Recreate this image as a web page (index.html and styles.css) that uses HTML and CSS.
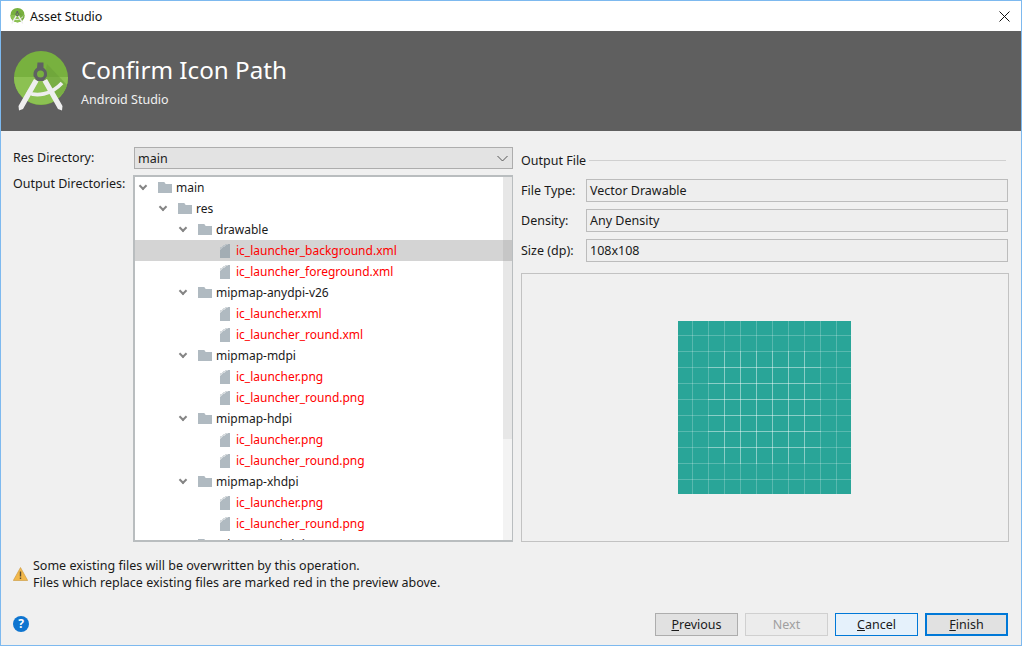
FILE: index.html
```html
<!DOCTYPE html>
<html lang="en">
<head>
    <meta charset="UTF-8">
    <title>Asset Studio</title>
    <link rel="stylesheet" href="styles.css">
</head>
<body>
<div class="window">
    <div class="titlebar">
        <svg class="title-icon" viewBox="0 0 54 60">
            <symbol id="studio-logo" viewBox="0 0 54 60">
                <circle cx="27" cy="27" r="27" fill="#78b13f"/>
                <path d="M0 26h54a27 27 0 0 1-54 1z" fill="#8cc152"/>
                <path d="M33 13L53 34a27 27 0 0 1-9 13L30 28z" fill="#6a9f38" opacity=".55"/>
                <path d="M23.500 11.500h6v5.200a7.500 7.500 0 0 1 3.500 6.300v2l-3.500 5h-6.500l-3.500-5v-2a7.500 7.500 0 0 1 3.500-6.300z" fill="#5f6163"/>
                <circle cx="26.500" cy="23" r="3.500" fill="#78b13f"/>
                <path d="M20 28l4.500 2.500L9 58l-4 1.500-.5-4.500zM33 28l-4.500 2.500L44 58l4 1.500.5-4.500z" fill="#eeeeee"/>
                <path d="M13 41c9 5 24 3 35-9" fill="none" stroke="#eeeeee" stroke-width="3.600"/>
            </symbol>
            <use href="#studio-logo"/>
        </svg>
        <span class="title-text">Asset Studio</span>
        <svg class="close-icon" viewBox="0 0 11 11"><path d="M.5.5l10 10M10.500.5l-10 10" stroke="#111" fill="none"/></svg>
    </div>

    <div class="banner">
        <svg class="banner-icon" viewBox="0 0 54 60"><use href="#studio-logo"/></svg>
        <div>
            <h1 class="banner-title">Confirm Icon Path</h1>
            <div class="banner-sub">Android Studio</div>
        </div>
    </div>

    <div class="content">
        <div class="left-col">
            <div class="form-row">
                <label class="row-label">Res Directory:</label>
                <div class="combo">
                    <span>main</span>
                    <svg class="combo-arrow" viewBox="0 0 11 7"><path d="M.5 1l5 5 5-5" fill="none" stroke="#555"/></svg>
                </div>
            </div>
            <div class="form-row tree-row-wrap">
                <label class="row-label">Output Directories:</label>
                <div class="tree">
                    <div class="tree-list">
                        <div class="node depth0"><i class="chev"></i><i class="folder"></i>main</div>
                        <div class="node depth1"><i class="chev"></i><i class="folder"></i>res</div>
                        <div class="node depth2"><i class="chev"></i><i class="folder"></i>drawable</div>
                        <div class="node file selected"><i class="doc"></i>ic_launcher_background.xml</div>
                        <div class="node file"><i class="doc"></i>ic_launcher_foreground.xml</div>
                        <div class="node depth2"><i class="chev"></i><i class="folder"></i>mipmap-anydpi-v26</div>
                        <div class="node file"><i class="doc"></i>ic_launcher.xml</div>
                        <div class="node file"><i class="doc"></i>ic_launcher_round.xml</div>
                        <div class="node depth2"><i class="chev"></i><i class="folder"></i>mipmap-mdpi</div>
                        <div class="node file"><i class="doc"></i>ic_launcher.png</div>
                        <div class="node file"><i class="doc"></i>ic_launcher_round.png</div>
                        <div class="node depth2"><i class="chev"></i><i class="folder"></i>mipmap-hdpi</div>
                        <div class="node file"><i class="doc"></i>ic_launcher.png</div>
                        <div class="node file"><i class="doc"></i>ic_launcher_round.png</div>
                        <div class="node depth2"><i class="chev"></i><i class="folder"></i>mipmap-xhdpi</div>
                        <div class="node file"><i class="doc"></i>ic_launcher.png</div>
                        <div class="node file"><i class="doc"></i>ic_launcher_round.png</div>
                        <div class="node depth2"><i class="chev"></i><i class="folder"></i>mipmap-xxhdpi</div>
                    </div>
                    <div class="scrollbar"><div class="thumb"></div></div>
                </div>
            </div>
        </div>

        <div class="splitter"><div class="grip"></div></div>

        <div class="right-col">
            <div class="group-title"><span>Output File</span><div class="group-line"></div></div>
            <div class="field-row"><label class="field-label">File Type:</label><div class="field">Vector Drawable</div></div>
            <div class="field-row"><label class="field-label">Density:</label><div class="field">Any Density</div></div>
            <div class="field-row"><label class="field-label">Size (dp):</label><div class="field">108x108</div></div>
            <div class="preview">
                <div class="swatch"></div>
            </div>
        </div>
    </div>

    <div class="notice">
        <svg class="warn-icon" viewBox="0 0 15 14">
            <path d="M7.500.5L14.700 13.500H.3z" fill="#f2b84b" stroke="#c9973c" stroke-width=".6"/>
            <path d="M6.800 4.500h1.400v5H6.800zM6.800 10.500h1.400V12H6.800z" fill="#5a4a2a"/>
        </svg>
        <div>
            <div>Some existing files will be overwritten by this operation.</div>
            <div>Files which replace existing files are marked red in the preview above.</div>
        </div>
    </div>

    <div class="footer">
        <div class="help">?</div>
        <div class="buttons">
            <button class="btn"><u>P</u>revious</button>
            <button class="btn disabled">Next</button>
            <button class="btn hover"><u>C</u>ancel</button>
            <button class="btn default"><u>F</u>inish</button>
        </div>
    </div>
</div>
</body>
</html>
```
FILE: styles.css
```css
html, body {
  margin: 0;
  padding: 0;
}

body {
  width: 1022px;
  height: 646px;
  overflow: hidden;
  font-family: "Noto Sans", "Open Sans", sans-serif;
  font-size: 12.5px;
  color: #1a1a1a;
}

.window {
  box-sizing: border-box;
  width: 1022px;
  height: 646px;
  display: flex;
  flex-direction: column;
  background-color: #f0f0f0;
  border: 1px solid #7db9ef;
}

.titlebar {
  height: 30px;
  flex: none;
  display: flex;
  align-items: center;
  background-color: #fff;
  padding-left: 9px;
  padding-right: 10px;
}

.title-icon {
  width: 15px;
  height: 16px;
  margin-right: 5px;
}

.title-text {
  flex: 1;
  color: #111;
}

.close-icon {
  width: 11px;
  height: 11px;
  margin-right: 1px;
}

.banner {
  height: 100px;
  flex: none;
  display: flex;
  align-items: center;
  background-color: #5f5f5f;
  color: #fff;
  padding-left: 13px;
}

.banner-icon {
  width: 54px;
  height: 60px;
  margin-right: 13px;
}

.banner-title {
  font-size: 24.2px;
  font-weight: normal;
  line-height: 32px;
  margin: -1px 0 6px 0;
}

.banner-sub {
  line-height: 16px;
  color: #f0f0f0;
}

.content {
  height: 412px;
  flex: none;
  display: flex;
  padding: 16px 13px 0 12px;
  box-sizing: border-box;
}

.left-col {
  width: 500px;
  flex: none;
  display: flex;
  flex-direction: column;
  gap: 7px;
}

.form-row {
  display: flex;
  align-items: center;
}

.tree-row-wrap {
  align-items: flex-start;
  height: 366px;
}

.row-label {
  width: 121px;
  flex: none;
  line-height: 16px;
}

.combo {
  box-sizing: border-box;
  flex: 1;
  height: 22px;
  display: flex;
  align-items: center;
  justify-content: space-between;
  padding: 0 4px 0 3px;
  background-color: #e3e3e3;
  border: 1px solid #adadad;
}

.combo-arrow {
  width: 11px;
  height: 7px;
}

.tree {
  box-sizing: border-box;
  flex: 1;
  height: 367px;
  margin-left: -1px;
  margin-top: -1px;
  display: flex;
  overflow: hidden;
  background-color: #fff;
  border: 1px solid #b9bdbf;
  border-width: 2px 1px 2px 2px;
  font-size: 12px;
}

.tree-list {
  flex: 1;
  min-width: 0;
}

.node {
  height: 21px;
  line-height: 21px;
  display: flex;
  align-items: center;
  white-space: nowrap;
}

.depth0 { padding-left: 3px; }
.depth1 { padding-left: 23px; }
.depth2 { padding-left: 43px; }
.file { padding-left: 85px; color: #f00; }

.selected {
  background-color: #d4d4d4;
}

.chev {
  width: 6px;
  height: 6px;
  flex: none;
  box-sizing: border-box;
  border-right: 2px solid #858585;
  border-bottom: 2px solid #858585;
  transform: translateY(-2px) rotate(45deg);
  margin-right: 12px;
  margin-left: 2px;
}

.folder {
  width: 14px;
  height: 11px;
  flex: none;
  margin-right: 4px;
  background-color: #b0bac1;
  clip-path: polygon(0 0, 45% 0, 55% 18%, 100% 18%, 100% 100%, 0 100%);
}

.doc {
  width: 10px;
  height: 14px;
  flex: none;
  margin-right: 6px;
  background: linear-gradient(145deg, transparent 0 18%, #d5dadd 18% 28%, #b0bac1 28%);
}

.selected .doc {
  background: linear-gradient(145deg, transparent 0 18%, #bcc3c8 18% 28%, #a3adb4 28%);
}

.scrollbar {
  width: 9px;
  flex: none;
  background-color: #f3f3f3;
}

.thumb {
  height: 262px;
  background: linear-gradient(#e7e7e7 0 63px, #c6c6c6 63px 84px, #e7e7e7 84px);
}

.splitter {
  width: 8px;
  flex: none;
  display: flex;
  align-items: center;
  justify-content: center;
}

.grip {
  width: 4px;
  height: 14px;
  background-image: radial-gradient(#c4c4c4 40%, transparent 45%);
  background-size: 2px 2px;
}

.right-col {
  width: 487px;
  flex: none;
}

.group-title {
  height: 27px;
  display: flex;
  align-items: center;
  gap: 3px;
  margin-right: 2px;
}

.group-line {
  flex: 1;
  height: 1px;
  background-color: #d0d0d0;
}

.field-row {
  display: flex;
  align-items: center;
  height: 23px;
  margin-top: 7px;
  margin-bottom: 7px;
}

.group-title + .field-row {
  margin-top: 5px;
}

.field-label {
  width: 65px;
  flex: none;
}

.field {
  box-sizing: border-box;
  flex: 1;
  height: 23px;
  line-height: 21px;
  padding-left: 3px;
  border: 1px solid #bcbcbc;
  background-color: #eeeeee;
}

.preview {
  box-sizing: border-box;
  height: 269px;
  margin-top: 11px;
  margin-right: -1px;
  display: flex;
  align-items: center;
  justify-content: center;
  border: 1px solid #c2c2c2;
}

/* keyline grid: faint full lines, brighter lines in the safe zone */
.swatch {
  width: 173px;
  height: 173px;
  margin-left: -1px;
  background-color: #29a598;
  background-image:
    repeating-linear-gradient(90deg, rgba(255,255,255,.3) 0 1px, transparent 1px 16px),
    repeating-linear-gradient(180deg, rgba(255,255,255,.3) 0 1px, transparent 1px 16px),
    repeating-linear-gradient(90deg, transparent 0 14px, rgba(255,255,255,.22) 14px 15px, transparent 15px 16px),
    repeating-linear-gradient(180deg, transparent 0 14px, rgba(255,255,255,.22) 14px 15px, transparent 15px 16px);
  background-position: 46px 30px, 30px 46px, 0 0, 0 0;
  background-size: 81px 113px, 113px 81px, 100% 100%, 100% 100%;
  background-repeat: no-repeat;
}

.notice {
  height: 60px;
  flex: none;
  box-sizing: border-box;
  display: flex;
  align-items: center;
  padding-left: 12px;
  padding-top: 2px;
  line-height: 17px;
}

.warn-icon {
  width: 15px;
  height: 14px;
  margin-right: 5px;
}

.footer {
  flex: 1;
  display: flex;
  align-items: center;
  justify-content: space-between;
  padding: 0 13px 0 12px;
}

.help {
  width: 16px;
  height: 16px;
  border-radius: 50%;
  background-color: #0f75d0;
  color: #fff;
  font-size: 12px;
  font-weight: bold;
  line-height: 16px;
  text-align: center;
}

.buttons {
  display: flex;
  gap: 7px;
}

.btn {
  box-sizing: border-box;
  width: 83px;
  height: 23px;
  padding: 0;
  font-family: inherit;
  font-size: 12.5px;
  color: #1a1a1a;
  background-color: #e1e1e1;
  border: 1px solid #adadad;
}

.btn.disabled {
  color: #a0a0a0;
  background-color: #ececec;
  border-color: #d0d0d0;
}

.btn.hover {
  background-color: #e5f1fb;
  border-color: #0078d7;
}

.btn.default {
  border: 2px solid #0078d7;
}
```
